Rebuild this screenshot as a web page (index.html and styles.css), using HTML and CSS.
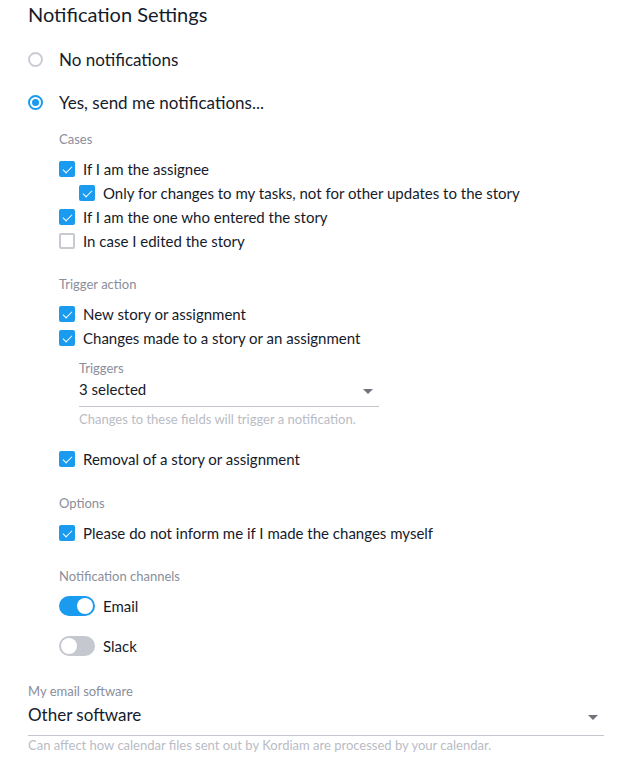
FILE: index.html
```html
<!DOCTYPE html>
<html lang="en">
<head>
<meta charset="utf-8">
<title>Notification Settings</title>
<link rel="stylesheet" href="styles.css">
</head>
<body>
<div class="page">
  <h1 class="title">Notification Settings</h1>

  <label class="radio-row"><span class="radio"></span><span class="radio-text">No notifications</span></label>
  <label class="radio-row second"><span class="radio checked"></span><span class="radio-text">Yes, send me notifications...</span></label>

  <div class="section">
    <div class="section-label">Cases</div>
    <div class="check-row"><span class="cb checked"></span><span>If I am the assignee</span></div>
    <div class="check-row nested"><span class="cb checked"></span><span>Only for changes to my tasks, not for other updates to the story</span></div>
    <div class="check-row"><span class="cb checked"></span><span>If I am the one who entered the story</span></div>
    <div class="check-row"><span class="cb"></span><span>In case I edited the story</span></div>
  </div>

  <div class="section">
    <div class="section-label">Trigger action</div>
    <div class="check-row"><span class="cb checked"></span><span>New story or assignment</span></div>
    <div class="check-row"><span class="cb checked"></span><span>Changes made to a story or an assignment</span></div>
    <div class="field small">
      <div class="field-label">Triggers</div>
      <div class="select"><span>3 selected</span><span class="caret"></span></div>
      <div class="hint">Changes to these fields will trigger a notification.</div>
    </div>
    <div class="check-row removal"><span class="cb checked"></span><span>Removal of a story or assignment</span></div>
  </div>

  <div class="section options">
    <div class="section-label">Options</div>
    <div class="check-row"><span class="cb checked"></span><span>Please do not inform me if I made the changes myself</span></div>
  </div>

  <div class="section channels">
    <div class="section-label">Notification channels</div>
    <div class="toggle-row"><span class="toggle on"></span><span>Email</span></div>
    <div class="toggle-row"><span class="toggle"></span><span>Slack</span></div>
  </div>

  <div class="field large">
    <div class="field-label">My email software</div>
    <div class="select"><span>Other software</span><span class="caret"></span></div>
    <div class="hint">Can affect how calendar files sent out by Kordiam are processed by your calendar.</div>
  </div>
</div>
</body>
</html>
```
FILE: styles.css
```css
* { box-sizing: border-box; }
html, body { margin: 0; padding: 0; background: #fff; }
body {
  font-family: Lato, "Open Sans", sans-serif;
  color: #161b2b;
}
.page {
  width: 636px;
  padding: 0 32px 0 28px;
}
.title {
  margin: 0;
  font-size: 20px;
  font-weight: 400;
  line-height: 28px;
  height: 28px;
}
.radio-row {
  display: flex;
  align-items: center;
  height: 32px;
  margin-top: 15px;
  font-size: 17px;
}
.radio-row.second { margin-top: 11px; }
.radio {
  width: 15px;
  height: 15px;
  border-radius: 50%;
  border: 2px solid #caccd3;
  margin-right: 16px;
  position: relative;
  flex: none;
}
.radio.checked { border-color: #1a9bef; }
.radio.checked::after {
  content: "";
  position: absolute;
  left: 2px; top: 2px;
  width: 7px; height: 7px;
  border-radius: 50%;
  background: #1a9bef;
}
.section {
  padding-left: 31px;
  margin-top: 13px;
}
.section + .section { margin-top: 23px; }
.section.options { margin-top: 24px; }
.section-label {
  font-size: 13px;
  line-height: 16px;
  color: #8a8e9b;
  margin-bottom: 10px;
}
.section.channels .section-label { margin-bottom: 8px; }
.check-row {
  display: flex;
  align-items: center;
  height: 24px;
  font-size: 15px;
}
.check-row.nested { padding-left: 20px; }
.check-row.removal { margin-top: 20px; }
.cb {
  width: 16px;
  height: 16px;
  border-radius: 2px;
  border: 2px solid #c8cad2;
  margin-right: 8px;
  flex: none;
  position: relative;
}
.cb.checked {
  background: #1a9bef;
  border-color: #1a9bef;
}
.cb.checked::after {
  content: "";
  position: absolute;
  left: 2px;
  top: 1px;
  width: 8px;
  height: 4px;
  border-left: 1.5px solid #fff;
  border-bottom: 1.5px solid #fff;
  transform: translate(0, 2px) rotate(-45deg);
}
.field.small {
  margin-left: 20px;
  width: 300px;
  margin-top: 10px;
}
.field-label {
  font-size: 13px;
  line-height: 16px;
  color: #8a8e9b;
}
.select {
  display: flex;
  align-items: center;
  justify-content: space-between;
  border-bottom: 1px solid #c4c6cd;
  font-size: 15px;
  height: 31px;
  padding: 3px 6px 8px 0;
}
.caret {
  width: 0; height: 0;
  border-left: 5px solid transparent;
  border-right: 5px solid transparent;
  border-top: 5px solid #70737c;
  margin-top: 6px;
}
.hint {
  margin-top: 4px;
  font-size: 13px;
  line-height: 16px;
  color: #b9bcc5;
}
.toggle-row {
  display: flex;
  align-items: center;
  height: 28px;
  font-size: 15px;
}
.toggle-row + .toggle-row { margin-top: 12px; }
.toggle {
  width: 36px;
  height: 20px;
  border-radius: 10px;
  background: #c6c8d0;
  margin-right: 8px;
  position: relative;
  flex: none;
}
.toggle::after {
  content: "";
  position: absolute;
  top: 2px; left: 2px;
  width: 16px; height: 16px;
  border-radius: 50%;
  background: #fff;
}
.toggle.on { background: #1a9bef; }
.toggle.on::after { left: 18px; }
.field.large {
  margin-top: 23px;
}
.field.large .select {
  font-size: 17px;
  height: 37px;
  padding: 4px 6px 10px 0;
}
.field.large .hint { margin-top: 1px; }
```
